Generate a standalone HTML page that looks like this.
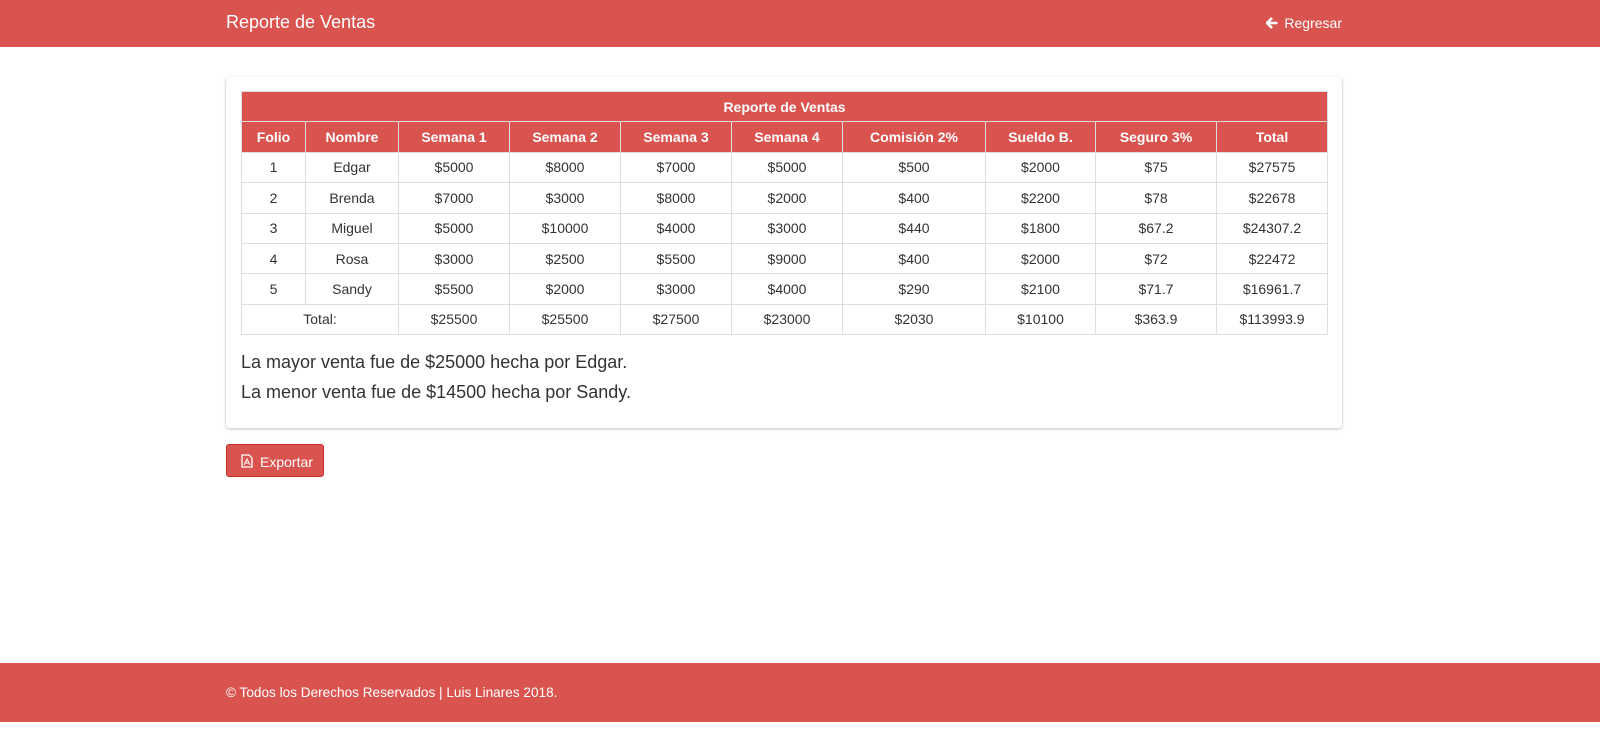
<!DOCTYPE html>
<html><head><meta charset="utf-8"><style>
*{box-sizing:border-box}
body{margin:0;width:1600px;height:737px;background:#fff;font-family:"Liberation Sans",Arial,sans-serif;color:#333;position:relative;overflow:hidden}
.nav{position:absolute;left:0;top:0;width:1600px;height:47px;background:#d9534f;color:#fff}
.brand{position:absolute;left:226px;top:12px;font-size:18px}
.back{position:absolute;right:258px;top:15px;font-size:14px}
.card{position:absolute;left:226px;top:77px;width:1116px;height:351px;border-radius:4px;box-shadow:0 1px 3px rgba(0,0,0,.25);background:#fff}
table{position:absolute;left:15px;top:14px;border-collapse:collapse;font-size:14px;table-layout:fixed;width:1087px}
td,th{border:1px solid #ddd;text-align:center;height:30.4px;padding:0}
th{background:#d9534f;color:#fff;font-weight:bold;border-color:#ddd;font-size:14px}
.p{position:absolute;left:15px;font-size:18px;color:#333}
.btn{position:absolute;left:226px;top:444px;width:98px;height:33px;background:#d9534f;border:1px solid #c9302c;border-radius:3px;color:#fff;font-size:14px;padding:9px 0 0 33px}
.foot{position:absolute;left:0;top:663px;width:1600px;height:59px;background:#d9534f;color:#fff;font-size:13.6px}
.foot span{position:absolute;left:226px;top:22px}
</style></head><body>
<div class="nav"><div class="brand">Reporte de Ventas</div>
<div class="back"><svg width="12" height="12" viewBox="0 0 12 12" style="vertical-align:-1px;margin-right:6px"><path d="M6 1 L1 6 L6 11 M1.5 6 H11.5" stroke="#fff" stroke-width="2.6" fill="none"/></svg>Regresar</div></div>
<div class="card">
<table>
<colgroup><col style="width:64px"><col style="width:93px"><col style="width:111px"><col style="width:111px"><col style="width:111px"><col style="width:111px"><col style="width:143px"><col style="width:110px"><col style="width:121px"><col style="width:111px"></colgroup>
<tr><th colspan="10">Reporte de Ventas</th></tr>
<tr><th>Folio</th><th>Nombre</th><th>Semana 1</th><th>Semana 2</th><th>Semana 3</th><th>Semana 4</th><th>Comisión 2%</th><th>Sueldo B.</th><th>Seguro 3%</th><th>Total</th></tr>
<tr><td>1</td><td>Edgar</td><td>$5000</td><td>$8000</td><td>$7000</td><td>$5000</td><td>$500</td><td>$2000</td><td>$75</td><td>$27575</td></tr>
<tr><td>2</td><td>Brenda</td><td>$7000</td><td>$3000</td><td>$8000</td><td>$2000</td><td>$400</td><td>$2200</td><td>$78</td><td>$22678</td></tr>
<tr><td>3</td><td>Miguel</td><td>$5000</td><td>$10000</td><td>$4000</td><td>$3000</td><td>$440</td><td>$1800</td><td>$67.2</td><td>$24307.2</td></tr>
<tr><td>4</td><td>Rosa</td><td>$3000</td><td>$2500</td><td>$5500</td><td>$9000</td><td>$400</td><td>$2000</td><td>$72</td><td>$22472</td></tr>
<tr><td>5</td><td>Sandy</td><td>$5500</td><td>$2000</td><td>$3000</td><td>$4000</td><td>$290</td><td>$2100</td><td>$71.7</td><td>$16961.7</td></tr>
<tr><td colspan="2">Total:</td><td>$25500</td><td>$25500</td><td>$27500</td><td>$23000</td><td>$2030</td><td>$10100</td><td>$363.9</td><td>$113993.9</td></tr>
</table>
<div class="p" style="top:275px">La mayor venta fue de $25000 hecha por Edgar.</div>
<div class="p" style="top:305px">La menor venta fue de $14500 hecha por Sandy.</div>
</div>
<div class="btn"><svg width="12" height="14" viewBox="0 0 12 14" style="position:absolute;left:14px;top:9px"><path d="M1 1 H8 L11 4 V13 H1 Z" stroke="#fff" stroke-width="1.3" fill="none"/><path d="M3 11 L6 5 L9 11 M4 9 H8" stroke="#fff" stroke-width="1" fill="none"/></svg>Exportar</div>
<div class="foot"><span>© Todos los Derechos Reservados | Luis Linares 2018.</span></div>
</body></html>
